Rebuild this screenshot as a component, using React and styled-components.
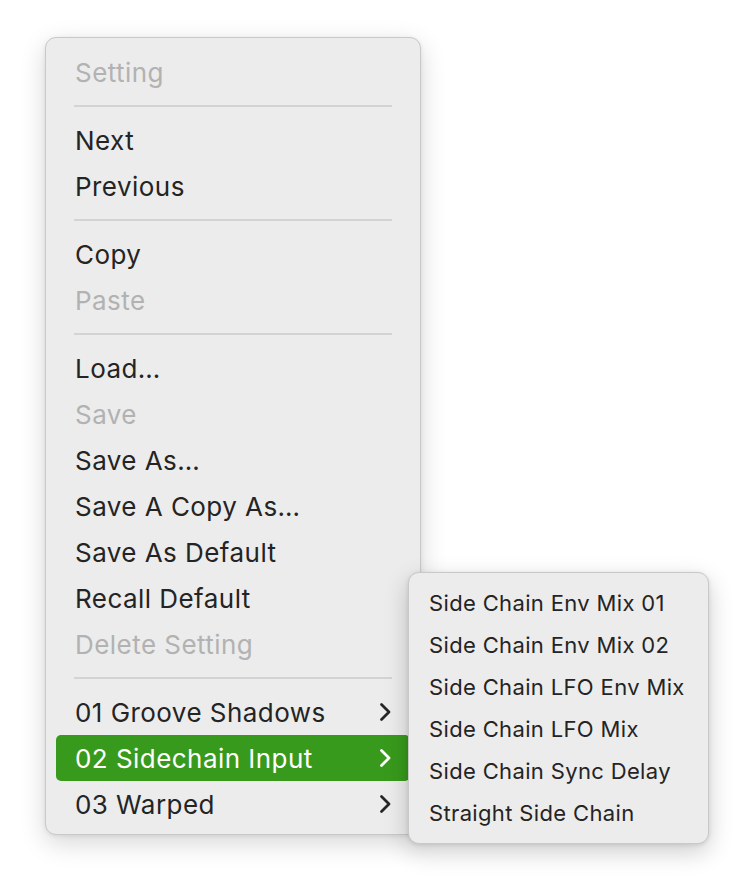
import React from 'react';
import styled, { createGlobalStyle } from 'styled-components';

const GlobalStyle = createGlobalStyle`
  html, body {
    margin: 0;
    padding: 0;
    background: #ffffff;
  }
  body {
    font-family: Inter, "Liberation Sans", Arial, sans-serif;
    -webkit-font-smoothing: antialiased;
  }
`;

const Stage = styled.div`
  position: relative;
  width: 747px;
  height: 890px;
  padding: 37px 0 0 45px;
  box-sizing: border-box;
`;

const Menu = styled.div`
  box-sizing: border-box;
  width: ${(p) => p.width}px;
  padding: ${(p) => p.pad};
  background: #ececec;
  border: 1px solid #c9c9c9;
  border-radius: 11px;
  box-shadow: 0 8px 26px rgba(0, 0, 0, 0.16), 0 1px 4px rgba(0, 0, 0, 0.08);
  display: flex;
  flex-direction: column;
`;

const SubMenu = styled(Menu)`
  position: absolute;
  left: 408px;
  top: 572px;
  box-shadow: 0 8px 24px rgba(0, 0, 0, 0.2), 0 1px 4px rgba(0, 0, 0, 0.1);
`;

const Item = styled.div`
  display: flex;
  align-items: center;
  justify-content: space-between;
  height: ${(p) => (p.small ? 42 : 46)}px;
  margin: 0 ${(p) => (p.small ? 6 : 10)}px;
  padding: 0 ${(p) => (p.small ? 15 : 18)}px 0 ${(p) => (p.small ? 14 : 19)}px;
  border-radius: 5px;
  font-size: ${(p) => (p.small ? 22 : 26)}px;
  letter-spacing: ${(p) => (p.small ? 0.35 : 0.45)}px;
  color: ${(p) => (p.active ? '#ffffff' : p.disabled ? '#b2b2b2' : '#242424')};
  background: ${(p) => (p.active ? '#389a1c' : 'transparent')};
  white-space: nowrap;
`;

const Separator = styled.div`
  height: 2px;
  margin: 10px 28px 10px 28px;
  background: #d3d3d3;
`;

const Chevron = ({ color }) => (
  <svg width="13" height="20" viewBox="0 0 13 20" fill="none">
    <path d="M2.5 2.5 L10 10 L2.5 17.5" stroke={color} strokeWidth="2.8" strokeLinecap="round" strokeLinejoin="round" />
  </svg>
);

const groups = [
  [{ label: 'Setting', disabled: true }],
  [{ label: 'Next' }, { label: 'Previous' }],
  [{ label: 'Copy' }, { label: 'Paste', disabled: true }],
  [
    { label: 'Load…' },
    { label: 'Save', disabled: true },
    { label: 'Save As…' },
    { label: 'Save A Copy As…' },
    { label: 'Save As Default' },
    { label: 'Recall Default' },
    { label: 'Delete Setting', disabled: true },
  ],
  [
    { label: '01 Groove Shadows', sub: true },
    { label: '02 Sidechain Input', sub: true, active: true },
    { label: '03 Warped', sub: true },
  ],
];

const presets = [
  'Side Chain Env Mix 01',
  'Side Chain Env Mix 02',
  'Side Chain LFO Env Mix',
  'Side Chain LFO Mix',
  'Side Chain Sync Delay',
  'Straight Side Chain',
];

export default function App() {
  return (
    <Stage>
      <GlobalStyle />
      <Menu width={376} pad="11px 0 7px">
        {groups.map((group, gi) => (
          <React.Fragment key={gi}>
            {gi > 0 && <Separator />}
            {group.map((it) => (
              <Item key={it.label} disabled={it.disabled} active={it.active}>
                <span>{it.label}</span>
                {it.sub && <Chevron color={it.active ? '#ffffff' : '#262626'} />}
              </Item>
            ))}
          </React.Fragment>
        ))}
      </Menu>
      <SubMenu width={301} pad="9px 0 9px">
        {presets.map((p) => (
          <Item small key={p}>
            <span>{p}</span>
          </Item>
        ))}
      </SubMenu>
    </Stage>
  );
}
